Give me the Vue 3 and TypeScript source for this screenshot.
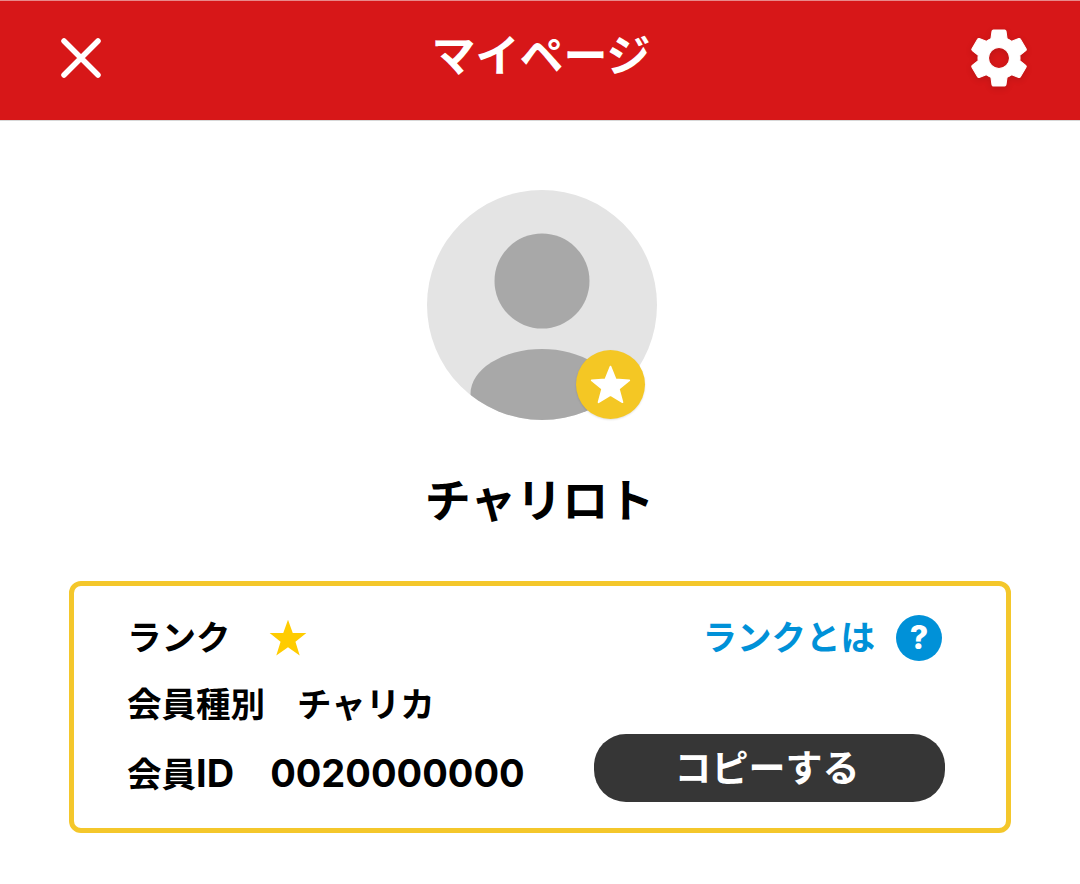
<script setup lang="ts">
const starPoints = '12,1.5 15,9 23,9.6 16.9,14.6 19,22.4 12,18.1 5,22.4 7.1,14.6 1,9.6 9,9';
</script>

<template>
  <div class="page">
    <header class="header">
      <button class="icon-btn close" aria-label="閉じる">
        <svg width="40" height="40" viewBox="0 0 40 40">
          <path d="M3 3 L37 37 M37 3 L3 37" stroke="#fff" stroke-width="5.5" stroke-linecap="round" fill="none" />
        </svg>
      </button>
      <h1 class="title">マイページ</h1>
      <button class="icon-btn gear" aria-label="設定">
        <svg width="70" height="70" viewBox="0 0 24 24">
          <path fill="#fff" stroke="#fff" stroke-width="0.35" stroke-linejoin="round" d="M19.14,12.94c.04-.3.06-.61.06-.94 0-.32-.02-.64-.07-.94l2.03-1.58c.18-.14.23-.41.12-.61l-1.92-3.32c-.12-.22-.37-.29-.59-.22l-2.39.96c-.5-.38-1.03-.7-1.62-.94l-.36-2.54c-.04-.24-.24-.41-.48-.41h-3.84c-.24 0-.43.17-.47.41l-.36 2.54c-.59.24-1.13.57-1.62.94l-2.39-.96c-.22-.08-.47 0-.59.22L2.74 8.87c-.12.21-.08.47.12.61l2.03 1.58c-.05.3-.09.63-.09.94s.02.64.07.94l-2.03 1.58c-.18.14-.23.41-.12.61l1.92 3.32c.12.22.37.29.59.22l2.39-.96c.5.38 1.03.7 1.62.94l.36 2.54c.05.24.24.41.48.41h3.84c.24 0 .44-.17.47-.41l.36-2.54c.59-.24 1.13-.56 1.62-.94l2.39.96c.22.08.47 0 .59-.22l1.92-3.32c.12-.22.07-.47-.12-.61l-2.01-1.58zM12 15.6c-1.98 0-3.6-1.62-3.6-3.6s1.62-3.6 3.6-3.6 3.6 1.62 3.6 3.6-1.62 3.6-3.6 3.6z" />
        </svg>
      </button>
    </header>

    <section class="profile">
      <div class="avatar">
        <svg width="230" height="230" viewBox="0 0 230 230">
          <defs>
            <clipPath id="avatar-clip"><circle cx="115" cy="115" r="115" /></clipPath>
          </defs>
          <circle cx="115" cy="115" r="115" fill="#e4e4e4" />
          <circle cx="115" cy="91" r="47.5" fill="#a8a8a8" />
          <ellipse cx="115" cy="204" rx="71.5" ry="45" fill="#a8a8a8" clip-path="url(#avatar-clip)" />
        </svg>
        <span class="badge">
          <svg width="41" height="41" viewBox="0 0 24 24">
            <polygon :points="starPoints" fill="#fff" stroke="#fff" stroke-width="1" stroke-linejoin="round" />
          </svg>
        </span>
      </div>
      <div class="name">チャリロト</div>
    </section>

    <section class="card">
      <div class="row">
        <div class="cell">
          <span class="label">ランク</span>
          <svg class="rank-star" width="38" height="38" viewBox="0 0 24 24">
            <polygon points="12,0.5 15,8.9 23.6,8.9 16.7,14.3 19.4,23 12,17.9 4.6,23 7.3,14.3 0.4,8.9 9,8.9" fill="#ffcc00" />
          </svg>
        </div>
        <a class="help">
          <span>ランクとは</span>
          <span class="help-icon">?</span>
        </a>
      </div>
      <div class="row">
        <div class="cell">
          <span class="label">会員種別</span>
          <span class="type">チャリカ</span>
        </div>
      </div>
      <div class="row">
        <div class="cell">
          <span class="label">会員<span class="latin">ID</span></span>
          <span class="member-id">0020000000</span>
        </div>
        <button class="copy">コピーする</button>
      </div>
    </section>
  </div>
</template>

<style>
html, body { margin: 0; background: #fff; }
</style>

<style scoped>
.page {
  width: 1080px;
  height: 884px;
  background: #fff;
  font-family: Inter, "Noto Sans CJK JP", sans-serif;
  color: #000;
  overflow: hidden;
}
.header {
  height: 113px;
  background: #d71718;
  border-top: 1px solid #e88a8a;
  border-bottom: 1px solid #d8d8d8;
  display: grid;
  grid-template-columns: 1fr auto 1fr;
  align-items: center;
  padding: 0 46px 6px;
}
.icon-btn {
  background: none;
  border: 0;
  padding: 0;
  display: flex;
}
.close { justify-self: start; margin-left: 15px; }
.gear { justify-self: end; }
.gear svg { filter: drop-shadow(0 2px 3px rgba(0, 0, 0, 0.12)); }
.title {
  margin: 0 0 4px 2px;
  color: #fff;
  font-size: 44px;
  font-weight: 700;
  line-height: 1;
}
.profile {
  display: flex;
  flex-direction: column;
  align-items: center;
  padding: 68.5px 0 0 3px;
}
.avatar {
  position: relative;
  width: 230px;
  height: 230px;
}
.avatar > svg { display: block; }
.badge {
  position: absolute;
  left: 149px;
  top: 160.5px;
  width: 69px;
  height: 69px;
  border-radius: 50%;
  background: #f4c724;
  box-shadow: 0 1px 2px rgba(0, 0, 0, 0.12);
  display: flex;
  align-items: center;
  justify-content: center;
}
.name {
  margin: 50.5px 4px 0 0;
  font-size: 46px;
  font-weight: 700;
  line-height: 60px;
}
.card {
  box-sizing: border-box;
  width: 942px;
  height: 252px;
  margin: 51px 0 0 69px;
  border: 5px solid #f4c72b;
  border-radius: 12px;
  padding: 22px 61px 0 53px;
  display: flex;
  flex-direction: column;
  gap: 7.5px;
}
.row {
  height: 60px;
  display: flex;
  align-items: center;
  justify-content: space-between;
}
.cell {
  display: flex;
  align-items: center;
}
.label {
  font-size: 34.5px;
  font-weight: 700;
  line-height: 1;
}
.latin { font-size: 38px; }
.rank-star { margin-left: 38px; }
.type {
  margin-left: 32px;
  font-size: 34.5px;
  font-weight: 700;
  line-height: 1;
}
.member-id {
  margin-left: 36px;
  font-size: 38px;
  font-weight: 700;
  line-height: 1;
}
.help {
  display: flex;
  align-items: center;
  gap: 21px;
  margin-right: 3px;
  color: #0091d8;
  font-size: 34.5px;
  font-weight: 700;
  line-height: 1;
}
.help-icon {
  width: 46px;
  height: 46px;
  border-radius: 50%;
  background: #0091d8;
  color: #fff;
  font-size: 32px;
  font-weight: 800;
  display: flex;
  align-items: center;
  justify-content: center;
}
.copy {
  width: 351px;
  height: 68px;
  margin-bottom: 10px;
  border: 0;
  border-radius: 32px;
  background: #363636;
  color: #fff;
  font-family: inherit;
  font-size: 37px;
  font-weight: 700;
  line-height: 1;
  padding: 0 5px 0 0;
}
</style>
